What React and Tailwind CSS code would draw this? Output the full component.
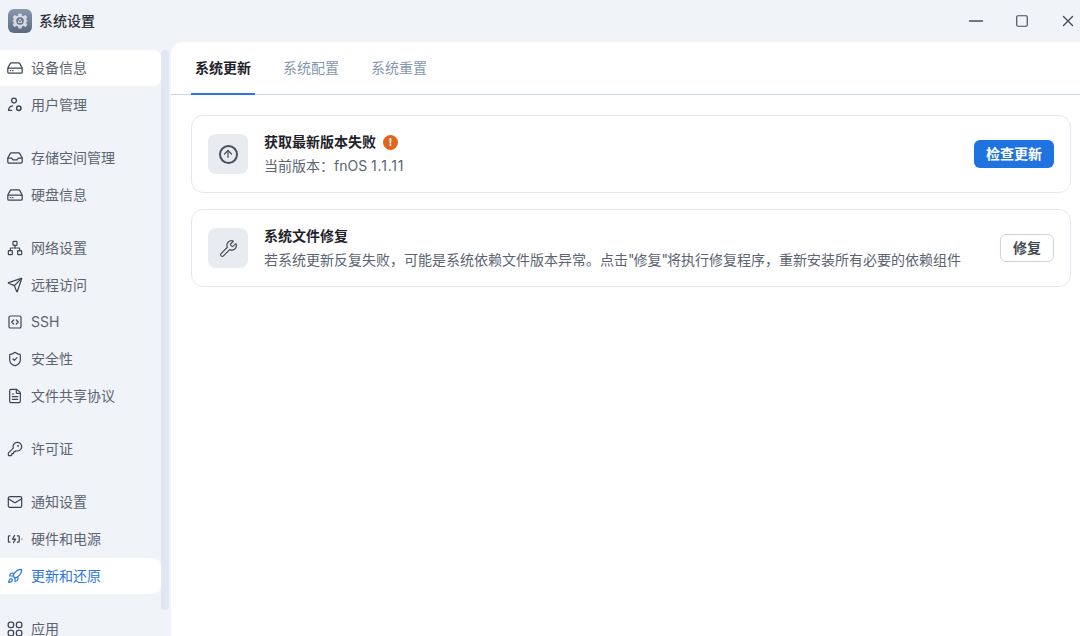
import { ArrowUp, FileText, KeyRound, Mail, Minus, Network, Rocket, Send, ShieldCheck, SquareCode, Square, Wrench, X } from 'lucide-react';

const font = { fontFamily: 'Inter, "Noto Sans CJK SC", sans-serif' };

function DiskIcon({ className }) {
    return (
        <svg className={className} viewBox="0 0 16 16" fill="none" stroke="currentColor" strokeWidth="1.25" strokeLinejoin="round" strokeLinecap="round">
            <path d="M.8 8 3.3 3.4c.2-.4.6-.6 1-.6h7.4c.4 0 .8.2 1 .6L15.2 8" />
            <rect x=".8" y="8" width="14.4" height="5.2" rx="1.3" />
            <path d="M3.4 10.6h.4M5.6 10.6h.4" />
        </svg>
    );
}

function InboxIcon({ className }) {
    return (
        <svg className={className} viewBox="0 0 16 16" fill="none" stroke="currentColor" strokeWidth="1.25" strokeLinejoin="round" strokeLinecap="round">
            <path d="M.8 8 3.3 3.4c.2-.4.6-.6 1-.6h7.4c.4 0 .8.2 1 .6L15.2 8v3.8c0 .8-.6 1.4-1.4 1.4H2.2c-.8 0-1.4-.6-1.4-1.4V8Z" />
            <path d="M1 8h3.6l1.3 1.8h4.2L11.4 8H15" />
        </svg>
    );
}

function UserGearIcon({ className }) {
    return (
        <svg className={className} viewBox="0 0 16 16" fill="none" stroke="currentColor" strokeWidth="1.25" strokeLinecap="round">
            <circle cx="7" cy="3.6" r="2.4" />
            <path d="M1.5 13.4c.1-2.5 1.7-4.2 4-4.6" />
            <path d="M1.6 13.4h3" />
            <circle cx="11.8" cy="11.2" r="2.2" strokeWidth="1.5" />
        </svg>
    );
}

function PowerIcon({ className }) {
    return (
        <svg className={className} viewBox="0 0 16 16" fill="none" stroke="currentColor" strokeWidth="1.2" strokeLinecap="round" strokeLinejoin="round">
            <path d="M3 4.8H2.2c-.5 0-.8.3-.8.8v4.8c0 .5.3.8.8.8H3" />
            <path d="M10.4 4.8h1c.5 0 .8.3.8.8v4.8c0 .5-.3.8-.8.8h-1" />
            <path d="M7.6 4.4 5.4 8.2h3.2l-2.2 3.4" />
            <path d="M14.8 8h.2" />
        </svg>
    );
}

function GridIcon({ className }) {
    return (
        <svg className={className} viewBox="0 0 16 16" fill="none" stroke="currentColor" strokeWidth="1.3">
            <rect x="1.2" y="1.2" width="5.4" height="5.4" rx="2" />
            <rect x="9.4" y="1.2" width="5.4" height="5.4" rx="2" />
            <rect x="1.2" y="9.4" width="5.4" height="5.4" rx="2" />
            <rect x="9.4" y="9.4" width="5.4" height="5.4" rx="2" />
        </svg>
    );
}

function AppIcon() {
    return (
        <div className="flex h-6 w-6 items-center justify-center rounded-md bg-gradient-to-b from-[#8a99ad] to-[#5a6a80]">
            <svg className="h-[18px] w-[18px]" viewBox="0 0 24 24">
                <path fill="#d5dae1" d="M10 2h4l.6 2.8 1.9.8L19 4l2.8 2.8-1.6 2.5.8 1.9L23 12l-2 .8-.8 1.9 1.6 2.5L19 20l-2.5-1.6-1.9.8L14 22h-4l-.6-2.8-1.9-.8L5 20l-2.8-2.8 1.6-2.5-.8-1.9L1 12l2-.8.8-1.9L2.2 6.8 5 4l2.5 1.6 1.9-.8L10 2Z" />
                <circle cx="12" cy="12" r="5" fill="#66758a" />
                <path d="M12 9.2 14.6 14H9.4L12 9.2Z" fill="none" stroke="#d5dae1" strokeWidth="1.3" />
            </svg>
        </div>
    );
}

const groups = [
    [
        { label: '设备信息', icon: DiskIcon, hl: true },
        { label: '用户管理', icon: UserGearIcon },
    ],
    [
        { label: '存储空间管理', icon: InboxIcon },
        { label: '硬盘信息', icon: DiskIcon },
    ],
    [
        { label: '网络设置', icon: Network },
        { label: '远程访问', icon: Send },
        { label: 'SSH', icon: SquareCode },
        { label: '安全性', icon: ShieldCheck },
        { label: '文件共享协议', icon: FileText },
    ],
    [{ label: '许可证', icon: KeyRound }],
    [
        { label: '通知设置', icon: Mail },
        { label: '硬件和电源', icon: PowerIcon },
        { label: '更新和还原', icon: Rocket, active: true },
    ],
    [{ label: '应用', icon: GridIcon }],
];

function NavItem({ item }) {
    const Icon = item.icon;
    let tone = 'text-[#5c6470]';
    if (item.active) tone = 'bg-white text-[#2b77e0]';
    else if (item.hl) tone = 'bg-white text-[#5c6470]';
    return (
        <div className={`flex h-9 shrink-0 items-center rounded-r-lg pl-[7px] text-sm ${tone}`}>
            <Icon className={`h-4 w-4 shrink-0 ${item.active ? 'text-[#2b77e0]' : 'text-[#3c4553]'}`} strokeWidth={1.8} />
            <span className="ml-2">{item.label}</span>
        </div>
    );
}

function Card({ icon, title, badge, desc, children }) {
    return (
        <div className="flex h-[78px] items-center rounded-xl border border-[#e3e8f0] pl-4 pr-4">
            <div className="flex h-10 w-10 shrink-0 items-center justify-center rounded-lg bg-[#e8ebef] text-[#46505f]">
                {icon}
            </div>
            <div className="ml-4 flex-1">
                <div className="flex h-6 items-center text-sm font-semibold leading-6 text-[#1f2329]">
                    {title}
                    {badge}
                </div>
                <div className="text-sm leading-6 text-[#5b6472]">{desc}</div>
            </div>
            {children}
        </div>
    );
}

function ArrowUpCircle() {
    return (
        <span className="flex h-[19px] w-[19px] items-center justify-center rounded-full border-2 border-[#46505f]">
            <ArrowUp className="h-[12px] w-[12px]" strokeWidth={2.4} />
        </span>
    );
}

export default function App() {
    return (
        <div className="flex h-[636px] w-[1080px] flex-col overflow-hidden bg-[#f0f3f8]" style={font}>
            <div className="flex h-[42px] shrink-0 items-center pl-2">
                <AppIcon />
                <span className="ml-[7px] text-sm font-medium text-[#2b2f36]">系统设置</span>
                <div className="ml-auto flex items-center text-[#444b55]">
                    <Minus className="mr-[28px] h-[22px] w-[22px]" strokeWidth={1.8} />
                    <Square className="mr-[30px] h-[14px] w-[14px]" strokeWidth={2} />
                    <X className="mr-[3px] h-[18px] w-[18px]" strokeWidth={1.8} />
                </div>
            </div>
            <div className="flex min-h-0 flex-1">
                <div className="flex w-[171px] shrink-0 overflow-hidden pt-2">
                    <div className="flex w-[161px] shrink-0 flex-col gap-[17px]">
                        {groups.map((group, i) => (
                            <div key={i} className="flex flex-col gap-px">
                                {group.map((item) => (
                                    <NavItem key={item.label} item={item} />
                                ))}
                            </div>
                        ))}
                    </div>
                    <div className="h-[560px] w-2 shrink-0 rounded-md bg-[#e1e8f1]" />
                </div>
                <div className="flex-1 rounded-tl-xl bg-white">
                    <div className="flex h-[53px] gap-6 border-b border-[#cbd5e3] pl-5">
                        <div className="relative flex items-center px-1 text-sm font-semibold text-[#1f2329]">
                            系统更新
                            <div className="absolute bottom-[-1px] left-0 right-0 h-0.5 bg-[#2b77e0]" />
                        </div>
                        <div className="flex items-center px-1 text-sm text-[#8597b0]">系统配置</div>
                        <div className="flex items-center px-1 text-sm text-[#8597b0]">系统重置</div>
                    </div>
                    <div className="flex flex-col gap-4 pl-5 pr-[9px] pt-5">
                        <Card
                            icon={<ArrowUpCircle />}
                            title="获取最新版本失败"
                            badge={
                                <span className="ml-[7px] flex h-[15px] w-[15px] items-center justify-center rounded-full bg-[#e0661e] text-[10px] font-bold text-white">!</span>
                            }
                            desc={<>当前版本：fnOS <span className="tracking-[0.8px]">1.1.11</span></>}
                        >
                            <button className="h-7 w-20 rounded-md bg-[#1f73e0] text-sm font-semibold text-white">检查更新</button>
                        </Card>
                        <Card
                            icon={<Wrench className="h-[19px] w-[19px]" strokeWidth={1.5} />}
                            title="系统文件修复"
                            desc={<>若系统更新反复失败，可能是系统依赖文件版本异常。点击<span className="tracking-[-1px]">"</span>修复<span className="tracking-[-1px]">"</span>将执行修复程序，重新安装所有必要的依赖组件</>}
                        >
                            <button className="h-7 w-[54px] rounded-md border border-[#cbd5e3] bg-white text-sm font-semibold text-[#444b55]">修复</button>
                        </Card>
                    </div>
                </div>
            </div>
        </div>
    );
}
